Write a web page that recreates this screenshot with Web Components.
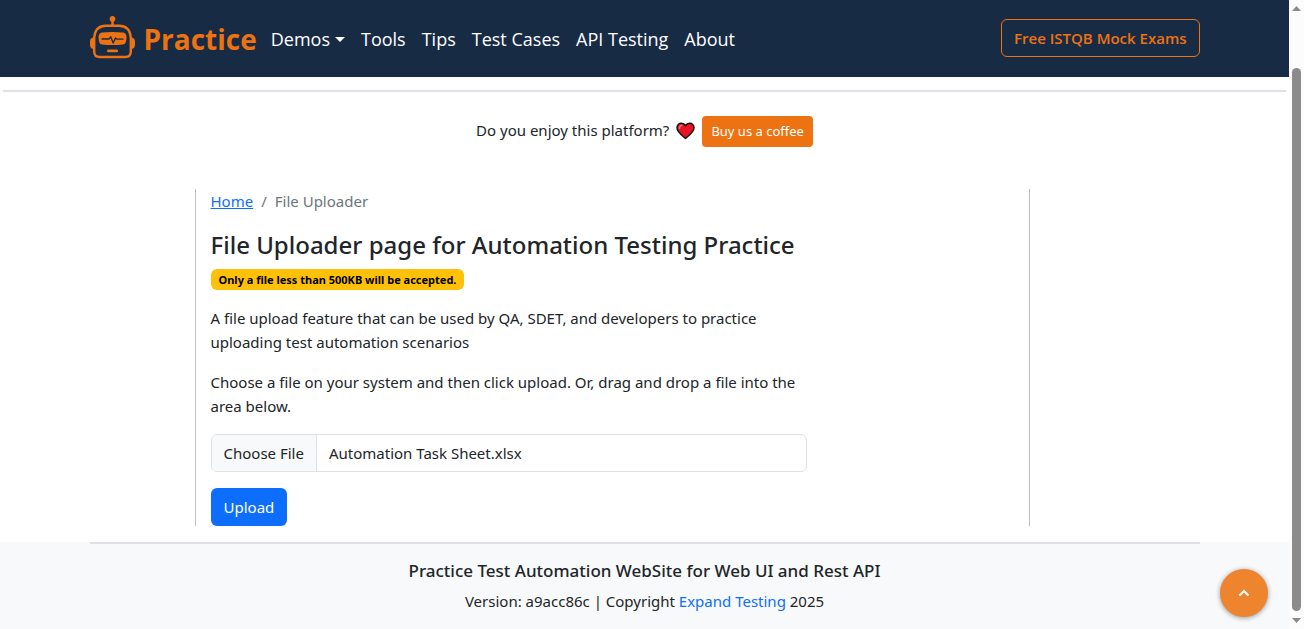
<!DOCTYPE html>
<html lang="en">
<head>
<meta charset="utf-8">
<meta name="viewport" content="width=device-width, initial-scale=1">
<title>File Uploader page for Automation Testing Practice</title>
<style>
  :root {
    --navy: #182b45;
    --orange: #ed7211;
    --blue: #0d6efd;
    --ink: #212529;
    --line: #dee2e6;
    --soft: #f8f9fa;
  }
  html, body { margin: 0; background: #fff; }
  body {
    font: 15px/24px "Noto Sans", "Open Sans", sans-serif;
    color: var(--ink);
  }
</style>
</head>
<body>
<app-shell>
  <site-header slot="header">
    <nav-link href="#demos" menu>Demos</nav-link>
    <nav-link href="#tools">Tools</nav-link>
    <nav-link href="#tips">Tips</nav-link>
    <nav-link href="#cases">Test Cases</nav-link>
    <nav-link href="#api">API Testing</nav-link>
    <nav-link href="#about">About</nav-link>
  </site-header>
  <support-bar>Do you enjoy this platform?</support-bar>
  <page-column>
    <bread-crumb page="File Uploader"></bread-crumb>
    <page-title note="Only a file less than 500KB will be accepted.">File Uploader page for Automation Testing Practice</page-title>
    <text-block>A file upload feature that can be used by QA, SDET, and developers to practice uploading test automation scenarios</text-block>
    <text-block>Choose a file on your system and then click upload. Or, drag and drop a file into the area below.</text-block>
    <file-upload filename="Automation Task Sheet.xlsx"></file-upload>
  </page-column>
  <site-footer slot="footer">Practice Test Automation WebSite for Web UI and Rest API</site-footer>
</app-shell>

<script>
  const define = (name, html, setup) => {
    const template = document.createElement('template');
    template.innerHTML = html;
    customElements.define(name, class extends HTMLElement {
      constructor() {
        super();
        this.attachShadow({ mode: 'open' }).append(template.content.cloneNode(true));
      }
      connectedCallback() { if (setup) setup(this, this.shadowRoot); }
    });
  };

  define('app-shell', `
    <style>
      :host { display: grid; grid-template-columns: minmax(0, 1fr) 15px; min-height: 100vh; }
      .page { display: flex; flex-direction: column; }
      main { flex: 1; }
    </style>
    <div class="page">
      <slot name="header"></slot>
      <main><slot></slot></main>
      <slot name="footer"></slot>
    </div>
    <scroll-rail></scroll-rail>
    <back-to-top></back-to-top>`);

  define('scroll-rail', `
    <style>
      :host {
        display: flex; flex-direction: column; align-items: center;
        position: sticky; top: 0; height: 100vh; box-sizing: border-box;
        padding: 6px 0; background: #fcfcfc;
      }
      svg { display: block; width: 9px; height: 5px; fill: #8b8b8b; }
      .track { flex: 1; width: 9px; display: flex; flex-direction: column; margin-bottom: 7px; }
      .track::before { content: ""; flex: 57; }
      .thumb { flex: 543; border-radius: 5px; background: #8b8b8b; }
    </style>
    <svg viewBox="0 0 9 5" aria-hidden="true"><path d="M4.500 0L9 5H0z"/></svg>
    <div class="track"><div class="thumb"></div></div>
    <svg viewBox="0 0 9 5" aria-hidden="true"><path d="M0 0H9L4.500 5z"/></svg>`);

  define('site-header', `
    <style>
      :host { display: block; background: var(--navy); font-family: "Open Sans", "Noto Sans", sans-serif; }
      .bar {
        display: flex; align-items: center; max-width: 1110px; height: 76px;
        margin: 0 auto; padding-bottom: 1px; color: #fff;
      }
      .brand {
        display: flex; align-items: center; gap: 8px; margin-right: 14px;
        color: var(--orange); font-size: 28px; font-weight: 700; line-height: 40px;
        text-decoration: none;
      }
      .brand svg { width: 46px; height: 44px; display: block; }
      .brand span { padding-top: 2px; }
      nav { display: flex; gap: 16px; flex: 1; padding-top: 2px; }
      .exams {
        box-sizing: border-box; height: 38px; padding: 6px 12px;
        border: 1px solid var(--orange); border-radius: 6px;
        color: var(--orange); font-weight: 600; text-decoration: none; white-space: nowrap;
      }
    </style>
    <div class="bar">
      <a class="brand" href="#home">
        <svg viewBox="0 0 46 44" aria-hidden="true">
          <g fill="none" stroke="#ed7211" stroke-width="2.400">
            <path d="M22.500 4v5"/>
            <path d="M4.200 21.500C5 13 10 9.700 16 9.700h13c6 0 11 3.300 11.800 11.800V35.500c0 3.500-2 5.500-5.500 5.500H9.700c-3.500 0-5.500-2-5.500-5.500z"/>
          </g>
          <g fill="#ed7211">
            <circle cx="22.500" cy="2.900" r="2.800"/>
            <path d="M4 21.500v11.500C1.500 33 0 31.500 0 29v-3.500C0 23 1.500 21.500 4 21.500zM41 21.500v11.500c2.500 0 4-1.500 4-4v-3.500c0-2.500-1.500-4-4-4z"/>
            <path d="M12 16.500q10.500-1 21 0q3.500.500 3.500 5q0 6.500-3.500 7q-10.500 1-21 0q-3.500-.500-3.500-7q0-4.500 3.500-5z"/>
            <rect x="17" y="33.500" width="11" height="2.800" rx="1.200"/>
          </g>
          <path d="M12 23h7l1.700-2.200 2.500 6.200 2.300-5 1.500 1.200h6" fill="none" stroke="#182b45" stroke-width="1.300" stroke-linejoin="round" stroke-linecap="round"/>
        </svg>
        <span>Practice</span>
      </a>
      <nav aria-label="Main"><slot></slot></nav>
      <a class="exams" href="#exams">Free ISTQB Mock Exams</a>
    </div>`);

  define('nav-link', `
    <style>
      :host { display: block; }
      a {
        display: flex; align-items: center; gap: 5px; color: #fff;
        font-size: 18px; line-height: 30px; text-decoration: none; white-space: nowrap;
      }
      i { display: none; border: 5px solid transparent; border-top-color: #fff; border-bottom: 0; }
      :host([menu]) i { display: block; }
    </style>
    <a><slot></slot><i></i></a>`,
    (host, root) => { root.querySelector('a').href = host.getAttribute('href'); });

  define('support-bar', `
    <style>
      :host { display: block; }
      hr { height: 2px; margin: 13px 3px 24px; border: 0; background: var(--line); }
      .row { display: flex; justify-content: center; align-items: flex-start; gap: 7px; }
      span { line-height: 28px; }
      svg { width: 19px; height: 18px; margin-top: 6px; }
      a {
        padding: 5px 9px; border-radius: 4px; background: var(--orange); color: #fff;
        font-size: 13px; line-height: 21px; text-decoration: none;
      }
    </style>
    <hr>
    <div class="row">
      <span><slot></slot></span>
      <svg viewBox="0 0 19 18" role="img" aria-label="heart">
        <path d="M9.500 16.500C6 13.500 1 10 1 5.800 1 3 3 1.200 5.300 1.200c1.800 0 3.300.900 4.200 2.500.900-1.600 2.400-2.500 4.200-2.500C16 1.200 18 3 18 5.800c0 4.200-5 7.700-8.500 10.700z" fill="#e81224" stroke="#111" stroke-width="1.500" stroke-linejoin="round"/>
        <path d="M3.500 6.500C3.300 4.500 4.300 3.400 5.800 3.400" fill="none" stroke="#f4717b" stroke-width="1.500" stroke-linecap="round"/>
      </svg>
      <a href="#coffee">Buy us a coffee</a>
    </div>`);

  define('page-column', `
    <style>
      :host {
        display: grid; grid-template-columns: 105fr 835fr 170fr;
        max-width: 1110px; margin: 42px auto 16px;
      }
      .col {
        grid-column: 2; padding: 0 15px;
        border: solid #c0c0c0; border-width: 0 1px;
      }
      .inner { max-width: 596px; }
    </style>
    <div class="col"><div class="inner"><slot></slot></div></div>`);

  define('bread-crumb', `
    <style>
      :host { display: block; margin-bottom: 16px; }
      nav { display: flex; gap: 8px; color: #6c757d; }
      a { color: var(--blue); }
    </style>
    <nav aria-label="Breadcrumb"><a href="#home">Home</a><span>/</span><span class="here" aria-current="page"></span></nav>`,
    (host, root) => { root.querySelector('.here').textContent = host.getAttribute('page'); });

  define('page-title', `
    <style>
      :host { display: block; margin-bottom: 16px; }
      h1 { margin: 0 0 8px; font-size: 24px; line-height: 32px; font-weight: 500; white-space: nowrap; }
      .badge {
        display: block; width: fit-content; padding: 0 8px; border-radius: 6px;
        background: #ffc107; color: #000; font-size: 11px; line-height: 21px; font-weight: 700;
      }
    </style>
    <h1><slot></slot></h1><span class="badge"></span>`,
    (host, root) => { root.querySelector('.badge').textContent = host.getAttribute('note'); });

  define('text-block', `
    <style>:host { display: block; } p { margin: 0 0 16px; }</style>
    <p><slot></slot></p>`);

  define('file-upload', `
    <style>
      :host { display: block; }
      form { display: flex; flex-direction: column; align-items: flex-start; gap: 16px; }
      input {
        display: block; box-sizing: border-box; width: 100%; height: 38px; padding: 6px 12px;
        border: 1px solid var(--line); border-radius: 6px; overflow: hidden;
        background: #fff; color: var(--ink); font: inherit;
      }
      input::file-selector-button {
        margin: -6px 12px -6px -12px; padding: 6px 12px; border: 0;
        border-right: 1px solid var(--line); border-radius: 0;
        background: var(--soft); color: var(--ink); font: inherit;
      }
      button {
        padding: 7px 13px; border: 0; border-radius: 6px;
        background: var(--blue); color: #fff; font: inherit;
      }
    </style>
    <form>
      <input type="file" aria-label="File to upload">
      <button type="button">Upload</button>
    </form>`,
    (host, root) => {
      const picked = new DataTransfer();
      picked.items.add(new File(['sheet'], host.getAttribute('filename')));
      root.querySelector('input').files = picked.files;
    });

  define('site-footer', `
    <style>
      :host { display: block; background: var(--soft); text-align: center; }
      hr { height: 2px; max-width: 1110px; margin: 0 auto 15px; border: 0; background: var(--line); }
      h2 { margin: 0 0 6px; font-size: 17px; line-height: 24px; font-weight: 500; }
      p { margin: 0; padding-bottom: 16px; }
      a { color: var(--blue); text-decoration: none; }
    </style>
    <hr>
    <h2><slot></slot></h2>
    <p>Version: a9acc86c | Copyright <a href="#expand">Expand Testing</a> 2025</p>`);

  define('back-to-top', `
    <style>
      :host { position: fixed; right: 36px; bottom: 12px; }
      button {
        display: grid; place-items: center; width: 48px; height: 48px; padding: 0;
        border: 0; border-radius: 50%; background: #ee842e; box-shadow: 0 1px 5px rgba(0, 0, 0, .4);
      }
      svg { width: 12px; height: 8px; }
    </style>
    <button type="button" aria-label="Back to top">
      <svg viewBox="0 0 12 8"><path d="M1.500 6.500L6 2l4.500 4.500" fill="none" stroke="#fff" stroke-width="2"/></svg>
    </button>`);
</script>
</body>
</html>
